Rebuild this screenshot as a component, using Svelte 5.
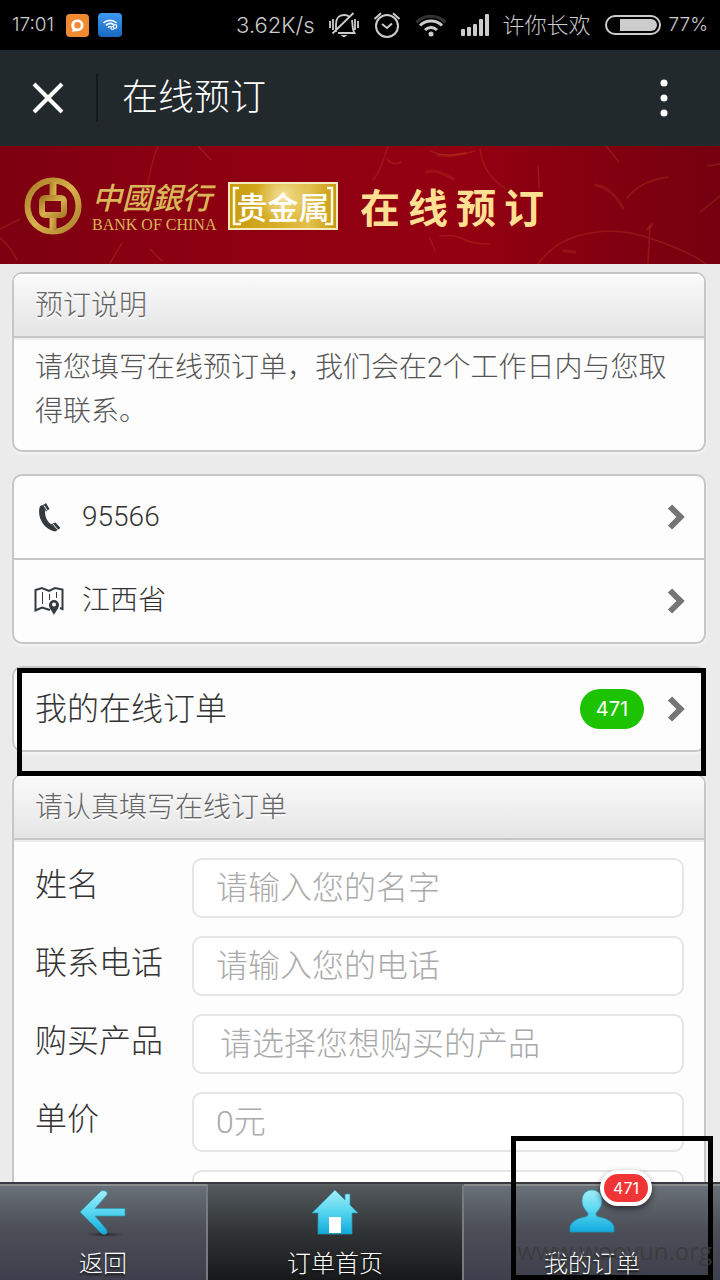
<script>
  const fields = [
    { id: 'name', label: '姓名', hint: '请输入您的名字' },
    { id: 'phone', label: '联系电话', hint: '请输入您的电话' },
    { id: 'product', label: '购买产品', hint: '请选择您想购买的产品', select: true },
    { id: 'price', label: '单价', hint: '0元' },
    { id: 'amount', label: '', hint: '' }
  ];
  const bannerTitle = ['在', '线', '预', '订'];
</script>

{#snippet chevron()}
  <svg class="chevron" width="18" height="28" viewBox="0 0 18 28" aria-hidden="true">
    <path d="M3 3.500 13.500 14 3 24.500" fill="none" stroke="#757575" stroke-width="6" />
  </svg>
{/snippet}

<div class="screen">
  <div class="status">
    <span class="time">17:01</span>
    <svg class="app-a" width="23" height="23" viewBox="0 0 23 23" aria-hidden="true">
      <rect width="23" height="23" rx="4" fill="#f08a32" />
      <path d="M5.500 17.200C6.500 17 6.900 16.300 6.500 15.200C3.500 10.500 6.500 5.500 11.500 5.500C15 5.500 17.500 8 17.500 11.200C17.500 15.500 13.500 18 9.500 16.900C8.500 17.700 7 17.900 5.500 17.200Z" fill="#fff" />
      <circle cx="11.500" cy="11.200" r="3.200" fill="#f08a32" />
    </svg>
    <svg class="app-b" width="24" height="24" viewBox="0 0 24 24" aria-hidden="true">
      <defs><linearGradient id="blue" x2="0" y2="1"><stop stop-color="#3d9af0" /><stop offset="1" stop-color="#1a67c0" /></linearGradient></defs>
      <rect width="24" height="24" rx="4" fill="url(#blue)" />
      <g fill="none" stroke="#fff" stroke-width="1.600">
        <path d="M5.500 10C9 6.500 15 6.500 18.500 10M8 12.300C10.500 10 13.500 10 15.500 11.500M10 14.700C11 13.700 12 13.400 13 13.600" />
        <circle cx="14.500" cy="15" r="1.500" stroke-width="1.200" /><circle cx="17" cy="13.500" r="1.800" stroke-width="1.200" />
      </g>
    </svg>
    <span class="speed">3.62K/s</span>
    <svg class="bell" width="30" height="26" viewBox="0 0 30 26" fill="none" stroke="#ccc" stroke-width="1.800" aria-hidden="true">
      <path d="M7 20V12C7 6 10 3 15 3C17 3 19 3.500 20 4.500M23 8C23.800 12 23 17 25.500 21H9M3.500 21.500 24.500 1M1 9V16M4 7V18M26 7V18M29 9V16" />
      <path d="M11.500 23H18.500L15 25.500Z" fill="#ccc" stroke="none" />
    </svg>
    <svg class="alarm" width="28" height="26" viewBox="0 0 28 26" fill="none" stroke="#ccc" stroke-width="2" aria-hidden="true">
      <circle cx="14" cy="14" r="11" /><path d="M9 12 14 16 19 11.500M1.500 7 8 1.200M20 1.200 26.500 7" />
    </svg>
    <svg class="wifi" width="32" height="24" viewBox="0 0 32 24" fill="none" stroke="#ccc" stroke-width="3" aria-hidden="true">
      <path d="M1.500 9.500C9 1 23 1 30.500 9.500" stroke="#333" />
      <path d="M5 12.500C11 6.500 21 6.500 27 12.500M10 17C13.500 13.500 18.500 13.500 22 17" />
      <circle cx="16" cy="21" r="2.500" fill="#ccc" stroke="none" />
    </svg>
    <svg class="signal" width="28" height="22" viewBox="0 0 28 22" fill="#ccc" aria-hidden="true">
      <rect y="15" width="4" height="7" rx="1" /><rect x="6" y="13" width="4" height="9" rx="1" /><rect x="12" y="10" width="4" height="12" rx="1" /><rect x="18" y="5" width="4" height="17" rx="1" /><rect x="24" width="4" height="22" rx="1" />
    </svg>
    <span class="carrier">许你长欢</span>
    <svg class="battery" width="56" height="20" viewBox="0 0 56 20" aria-hidden="true">
      <rect x="1" y="1" width="54" height="18" rx="9" fill="none" stroke="#ccc" stroke-width="2" />
      <path d="M15 4H46A6 6 0 0 1 46 16H15Z" fill="#ccc" />
    </svg>
    <span class="percent">77%</span>
  </div>

  <header>
    <button class="close" aria-label="关闭">
      <svg width="32" height="32" viewBox="0 0 32 32"><path d="M2 2 30 30M30 2 2 30" stroke="#fff" stroke-width="4" /></svg>
    </button>
    <h1>在线预订</h1>
    <button class="more" aria-label="更多">
      <svg width="8" height="40" viewBox="0 0 8 40" fill="#fff"><circle cx="4" cy="5" r="3.500" /><circle cx="4" cy="20" r="3.500" /><circle cx="4" cy="35" r="3.500" /></svg>
    </button>
  </header>

  <main>
    <div class="banner">
      <svg class="fibres" viewBox="0 0 720 118" preserveAspectRatio="xMidYMid slice" fill="none" stroke="#c5522c" stroke-linecap="round" aria-hidden="true">
        <g opacity=".28" stroke-width="1.500">
          <path d="M0 92C8 98 12 105 17 114M145 52Q150 20 158 0M198 0 211 14M388 0C383 15 380 26 373 34M387 13Q393 20 401 16M480 3C482 20 490 33 506 43M606 0 619 16M627 52Q640 35 668 31M538 118C565 80 620 80 655 94Q690 106 706 118M650 80 648 117M440 90Q455 88 463 93T490 98M110 117 122 97M150 103 162 115M20 73 0 83M700 66 720 50M708 20 720 18M430 92 435 105M538 20 539 42M430 5Q447 13 475 5" />
        </g>
        <g opacity=".22" stroke-width="3"><path d="M438 9Q450 11 465 7M427 26Q435 22 453 33M596 39Q612 42 623 62M648 83 652 78M564 105 575 106" /></g>
      </svg>
      <svg class="coin" width="58" height="58" viewBox="0 0 58 58" fill="none" aria-hidden="true">
        <defs><linearGradient id="gold" x2="1" y2="1"><stop stop-color="#a97a25" /><stop offset=".5" stop-color="#d8b24e" /><stop offset="1" stop-color="#ad7f2b" /></linearGradient></defs>
        <circle cx="29" cy="29" r="25.500" stroke="url(#gold)" stroke-width="6" />
        <path d="M25.500 5H32.500V18H25.500ZM25.500 40H32.500V53H25.500Z" fill="url(#gold)" />
        <rect x="18" y="21" width="22" height="17" rx="3" stroke="url(#gold)" stroke-width="6" />
      </svg>
      <div class="bank"><span class="cn">中國銀行</span><span class="en">BANK OF CHINA</span></div>
      <div class="metal">
        <svg viewBox="0 0 110 48" fill="none" stroke="#fffbe8" stroke-width="2.500" aria-hidden="true"><path d="M11 6H6V42H13M99 6H104V42H97" /></svg>
        <span>贵金属</span>
      </div>
      <div class="banner-title">{#each bannerTitle as c}<span>{c}</span>{/each}</div>
    </div>

    <div class="content">
      <section class="card">
        <h2>预订说明</h2>
        <p>请您填写在线预订单，我们会在2个工作日内与您取得联系。</p>
      </section>

      <section class="card">
        <a class="row" href="tel:95566">
          <svg class="lead" width="30" height="30" viewBox="0 0 30 30" fill="#343a3d" aria-hidden="true">
            <path d="M6 4C2.500 14 9 27 21 29.500L23 28.500 17.500 22.500C13.500 20 11 15 11 10L10.500 2.500Z" />
            <path d="M8.500 3.500 12 1 15.500 7 12 9.800ZM17 22 21.500 20.500 26.500 26 22.500 28.500Z" />
            <path d="M10 3.500 13.500 9M18.500 21.500 23.500 27.500" stroke="#fdfdfd" />
          </svg>
          <span>95566</span>{@render chevron()}
        </a>
        <a class="row" href="#region">
          <svg class="lead" width="30" height="30" viewBox="0 0 30 30" fill="none" aria-hidden="true">
            <path d="M16 24 8 21.500 1.500 24.500V4L8 2 15 5 21 2 28.500 3.500V23L26 22" stroke="#343a3d" stroke-width="2" />
            <path d="M8.500 6V18M15.500 8V14M22.500 6V12" stroke="#343a3d" />
            <path d="M20 14A5 5 0 0 1 25 19C25 22 22 25 20 29C18 25 15 22 15 19A5 5 0 0 1 20 14Z" fill="#343a3d" /><circle cx="20" cy="18.500" r="2" fill="#fff" />
          </svg>
          <span>江西省</span>{@render chevron()}
        </a>
      </section>

      <section class="card marked">
        <a class="row orders" href="#orders"><span>我的在线订单</span><b>471</b>{@render chevron()}</a>
        <div class="mark"></div>
      </section>

      <section class="card">
        <h2>请认真填写在线订单</h2>
        <form>
          {#each fields as f}
            <div class="field">
              <label for={f.id}>{f.label}</label>
              {#if f.select}
                <select id={f.id}><option>{f.hint}</option></select>
              {:else}
                <input id={f.id} placeholder={f.hint} />
              {/if}
            </div>
          {/each}
        </form>
      </section>
    </div>
  </main>

  <nav>
    <a href="#back">
      <svg width="48" height="48" viewBox="0 0 48 48" aria-hidden="true">
        <defs>
          <linearGradient id="cyan" x2="0" y2="1"><stop stop-color="#a5eefa" /><stop offset=".5" stop-color="#55d5f0" /><stop offset="1" stop-color="#12aadd" /></linearGradient>
          <radialGradient id="shade"><stop stop-color="#111" stop-opacity=".6" /><stop offset="1" stop-color="#111" stop-opacity="0" /></radialGradient>
        </defs>
        <ellipse cx="26" cy="45.500" rx="20" ry="2.500" fill="url(#shade)" />
        <path d="M1 23 22 2Q25 .5 28 3Q29 5 27 7L16 19.500H46V27H16L27 40Q29 43 27 45Q24 46 22 44Z" fill="url(#cyan)" stroke="#2796ae" stroke-width=".7" />
      </svg>
      <span>返回</span>
    </a>
    <a class="home" href="#home">
      <svg width="48" height="48" viewBox="0 0 48 48" aria-hidden="true">
        <path d="M24 1 34 11V5H39V16L47 24H41V45H7V24H1Z" fill="url(#cyan)" stroke="#2796ae" stroke-width=".7" />
        <rect x="18" y="28" width="12" height="16" fill="#fff" />
      </svg>
      <span>订单首页</span>
    </a>
    <a class="mine" href="#mine">
      <span class="person">
        <svg width="48" height="48" viewBox="0 0 48 48" aria-hidden="true">
          <path d="M24 1C31 1 34 6 34 12C34 17 31 21 28 24Q27 27 31 28C38 29 46 33 46 39V43H2V39C2 33 10 29 17 28Q21 27 20 24C17 21 14 17 14 12C14 6 17 1 24 1Z" fill="url(#cyan)" stroke="#2796ae" stroke-width=".8" />
        </svg>
        <b>471</b>
      </span>
      <span>我的订单</span>
      <i class="mark"></i>
      <small>www.wooyun.org</small>
    </a>
  </nav>
</div>

<style>
  :global(body) { background: #ebebeb; }
  * { box-sizing: border-box; }
  .screen {
    display: flex; flex-direction: column; height: 100vh; overflow: hidden;
    font-family: Roboto, "Noto Sans CJK SC", sans-serif; font-weight: 300;
    background: #ebebeb; color: #333;
  }
  svg { display: block; flex: none; }
  a { color: inherit; text-decoration: none; }
  button { background: none; border: 0; padding: 0; display: grid; place-items: center; }

  .status {
    display: flex; align-items: center; flex: none; height: 50px; padding: 0 12px;
    background: #000; color: #ccc; font: 300 22px/46px Inter, "Noto Sans CJK SC", sans-serif; white-space: nowrap;
  }
  .time, .percent { font-size: 19px; }
  .app-a { margin-left: 12px; }
  .app-b { margin-left: 9px; }
  .speed { margin-left: auto; }
  .bell, .alarm, .wifi, .signal, .carrier, .battery { margin-left: 14px; }
  .percent { margin-left: 8px; }

  header { display: flex; align-items: center; flex: none; height: 96px; background: #22292c; color: #fff; }
  .close { width: 98px; height: 48px; border-right: 2px solid #151919; }
  h1 { margin: 0 0 0 24px; flex: 1; font-size: 36px; line-height: 48px; font-weight: 300; }
  .more { width: 48px; height: 48px; margin-right: 32px; }

  main { flex: 1; min-height: 0; overflow-y: auto; scrollbar-width: none; }
  .banner {
    position: relative; display: flex; align-items: center; height: 118px; padding: 2px 24px 0;
    background: linear-gradient(90deg, #7c0010, #8d0012 30%, #930011 65%, #75000f);
  }
  .fibres { position: absolute; inset: 0; width: 100%; height: 100%; }
  .coin, .bank, .metal, .banner-title { position: relative; flex: none; }
  .bank { display: flex; flex-direction: column; width: 124px; margin-left: 10px; color: #d9b659; white-space: nowrap; }
  .cn { font: italic 500 30px/38px "Noto Sans CJK TC", sans-serif; }
  .en { font: 400 16px/20px "Liberation Serif", serif; }
  .metal {
    width: 110px; height: 48px; margin-left: 12px; border: 2px solid #f6e9bd; display: grid; place-items: center;
    background: radial-gradient(circle at 50% 30%, #f4e29c, transparent 45%), linear-gradient(90deg, #c99c0c, #d9b02a 50%, #e3c14d 75%, #c79a0d);
    color: #fff; font: 500 31px/42px "Noto Sans CJK SC", sans-serif;
  }
  .metal svg { position: absolute; inset: -2px; }
  .banner-title { display: flex; gap: 8px; margin-left: 22px; color: #ffdf91; font: 700 40px/52px "Noto Sans CJK SC", sans-serif; }

  .content { display: flex; flex-direction: column; gap: 22px; padding: 8px 14px 22px 12px; }
  .card { background: #fdfdfd; border: 2px solid #c6c6c6; border-radius: 10px; box-shadow: 0 2px 3px #f5f5f5; }
  h2 {
    margin: 0; height: 64px; padding: 0 21px; border-bottom: 2px solid #c6c6c6; border-radius: 8px 8px 0 0;
    background: linear-gradient(#fafafa, #e5e5e5); box-shadow: 0 2px #eee, inset 0 2px #fff;
    color: #666; font-size: 28px; line-height: 64px; font-weight: 300; text-shadow: 0 2px #fff;
  }
  p { margin: 0; padding: 8px 21px 16px; color: #555; font-size: 28px; line-height: 44px; }
  .row { display: flex; align-items: center; height: 82px; padding: 0 19px 0 20px; font-size: 28px; line-height: 44px; }
  .row + .row { height: 84px; border-top: 2px solid #c6c6c6; }
  .row > span { flex: 1; margin-left: 18px; }
  .row.orders { padding-left: 21px; font-size: 32px; }
  .row.orders > span { margin-left: 0; }
  .orders b {
    min-width: 64px; height: 40px; margin-right: 23px; border-radius: 20px; background: #1dc200;
    color: #fff; font: 400 20px/40px Inter, sans-serif; text-align: center;
  }
  .marked { position: relative; z-index: 1; }
  .mark { position: absolute; border: 5px solid #000; pointer-events: none; }
  .marked .mark { inset: 0 -2px -26px 3px; }

  form { display: grid; gap: 18px; padding: 18px 20px; }
  .field { display: grid; grid-template-columns: 158px 1fr; }
  label { padding-left: 1px; font-size: 32px; line-height: 54px; }
  input, select {
    width: 100%; min-width: 0; height: 60px; padding: 0 22px; border: 2px solid #e5e5e5; border-radius: 10px;
    background: #fff; color: #aaa; font: inherit; font-size: 32px; appearance: none;
  }
  select { padding-left: 26px; }
  input::placeholder { color: #aaa; opacity: 1; }

  nav {
    position: relative; display: grid; grid-template-columns: 13fr 16fr 16fr; flex: none; height: 98px;
    border-top: 2px solid #383a40; color: #fff; font-size: 24px; line-height: 32px;
  }
  nav > a {
    position: relative; display: flex; flex-direction: column; align-items: center; gap: 11px; padding-top: 3px;
    border-top: 2px solid #898d8e; border-right: 2px solid #777b7d;
    background: linear-gradient(#697077, #4c4f58 45%, #3d404c); text-shadow: 0 2px 2px #111;
  }
  nav > .home { border-top-color: #5c6063; background: linear-gradient(#53595d, #303335 50%, #17181a); }
  nav > .mine { border-right: 0; }
  .person { position: relative; }
  .person b {
    position: absolute; left: 32px; top: -19px; width: 52px; height: 36px; border: 4px solid #fff; border-radius: 18px;
    background: #ef3535; box-shadow: 0 3px 6px #0008; font: 400 16px/28px Inter, sans-serif; text-align: center; text-shadow: none;
  }
  .mine .mark { inset: -50px 7px 0 47px; }
  small { position: absolute; right: 8px; bottom: 11px; color: #3a3a3acc; font: 400 24px/36px "Open Sans", sans-serif; text-shadow: none; }
</style>
